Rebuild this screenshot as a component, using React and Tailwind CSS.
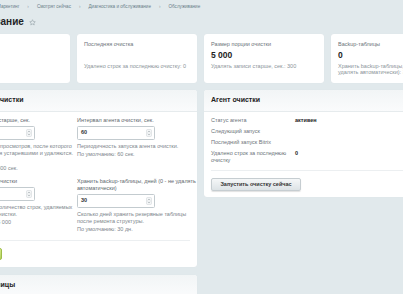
import React from "react";

const font = { fontFamily: '"Liberation Sans", Arial, sans-serif' };

function Spinner() {
  return (
    <svg width="6" height="8" viewBox="0 0 6 8" className="shrink-0">
      <rect x="0.5" y="0.5" width="5" height="7" rx="1" fill="#f3f5f6" stroke="#d3d8db" strokeWidth="0.6" />
      <path d="M1.8 3.2 L3 2.1 L4.2 3.2" fill="none" stroke="#9aa3a8" strokeWidth="0.6" />
      <path d="M1.8 4.8 L3 5.9 L4.2 4.8" fill="none" stroke="#9aa3a8" strokeWidth="0.6" />
    </svg>
  );
}

function NumInput({ value }) {
  return (
    <div className="mt-[2.5px] flex h-[14px] w-[78px] items-center justify-between rounded-[1.5px] border border-[#c3cbcf] bg-white pl-[3px] pr-[2px]">
      <span className="text-[5.5px] font-bold leading-none text-[#2f3336]">{value}</span>
      <Spinner />
    </div>
  );
}

function Field({ label, value, help, def }) {
  return (
    <div className="flex flex-col">
      <div className="text-[5.5px] leading-[7px] text-[#60686d]">
        {label.map((l, i) => (
          <div key={i} className="whitespace-nowrap">{l}</div>
        ))}
      </div>
      <NumInput value={value} />
      <div className="mt-[2.5px] text-[5.5px] leading-[7px] text-[#7c858b]">
        {help.map((l, i) => (
          <div key={i} className="h-[7px] whitespace-nowrap">{l}</div>
        ))}
      </div>
      <div className="mt-[1px] whitespace-nowrap text-[5.5px] leading-[7px] text-[#7c858b]">{def}</div>
    </div>
  );
}

function Card({ label, value, desc }) {
  return (
    <div className="flex h-[49px] flex-col rounded-[3px] bg-white px-[7px] pt-[7px] shadow-[0_0_1px_rgba(0,0,0,0.06)]">
      <div className="whitespace-nowrap text-[5.5px] leading-[6px] text-[#6b7378]">{label}</div>
      <div className="mt-[3px] h-[10px] whitespace-nowrap text-[8.5px] font-bold leading-[10px] text-[#222]">{value}</div>
      <div className="mt-[2.5px] text-[5.5px] leading-[6.5px] text-[#8a9398]">
        {desc.map((l, i) => (
          <div key={i} className="whitespace-nowrap">{l}</div>
        ))}
      </div>
    </div>
  );
}

function PanelHeader({ children }) {
  return (
    <div className="flex h-[22px] items-center rounded-t-[3px] border-b border-[#e6ebed] bg-gradient-to-b from-[#f2f5f6] to-[#fafbfc] px-[7px] text-[7px] font-bold text-[#222]">
      {children}
    </div>
  );
}

export default function App() {
  return (
    <div className="h-[294px] w-[403px] overflow-hidden bg-[#e1e9ec]" style={font}>
      <div className="ml-[-50px] w-[520px]">
        {/* breadcrumbs */}
        <div className="ml-[47px] mt-[3px] flex h-[7px] items-center gap-[8px] whitespace-nowrap text-[4.6px] leading-[7px] text-[#6b7f8a]">
          <span>Маркетинг</span>
          <span className="text-[#95a3ab]">›</span>
          <span>Смотрят сейчас</span>
          <span className="text-[#95a3ab]">›</span>
          <span>Диагностика и обслуживание</span>
          <span className="text-[#95a3ab]">›</span>
          <span>Обслуживание</span>
        </div>
        {/* title */}
        <div className="mt-[6px] flex h-[12px] items-center gap-[5px]">
          <span className="text-[10px] font-bold leading-[12px] text-[#1f2326]">Обслуживание</span>
          <svg width="7" height="7" viewBox="0 0 24 24" fill="none" stroke="#9aa6ac" strokeWidth="2.2" strokeLinejoin="round">
            <path d="M12 2.5l2.9 6.2 6.6.7-5 4.5 1.4 6.6L12 17.2l-5.9 3.3 1.4-6.6-5-4.5 6.6-.7z" />
          </svg>
        </div>
        {/* cards */}
        <div className="mt-[6px] grid grid-cols-[120px_120px_120px_120px] gap-[7px]">
          <Card label="Статус" value="OK" desc={["Модуль"]} />
          <Card label="Последняя очистка" value="" desc={["Удалено строк за последнюю очистку: 0"]} />
          <Card label="Размер порции очистки" value="5 000" desc={["Удалять записи старше, сек.: 300"]} />
          <Card label="Backup-таблицы" value="0" desc={["Хранить backup-таблицы, дней (0 - не", "удалять автоматически): 30"]} />
        </div>
        {/* panels */}
        <div className="mt-[7px] grid grid-cols-[247px_247px] items-start gap-[7px]">
          <div className="flex flex-col gap-[8px]">
            <div className="rounded-[3px] bg-white shadow-[0_0_1px_rgba(0,0,0,0.06)]">
              <PanelHeader>Настройки очистки</PanelHeader>
              <div className="px-[7px] pb-[7px] pt-[4.5px]">
                <div className="grid grid-cols-[113px_113px] gap-x-[7px] gap-y-[6px]">
                  <Field
                    label={["Удалять записи старше, сек."]}
                    value="300"
                    help={["Время (сек.) без просмотров, после которого", "записи считаются устаревшими и удаляются.", "Мин. 60"]}
                    def="По умолчанию: 300 сек."
                  />
                  <Field
                    label={["Интервал агента очистки, сек."]}
                    value="60"
                    help={["Периодичность запуска агента очистки."]}
                    def="По умолчанию: 60 сек."
                  />
                  <Field
                    label={["Размер порции очистки"]}
                    value="5000"
                    help={["Максимальное количество строк, удаляемых", "за один запуск очистки."]}
                    def="По умолчанию: 5 000"
                  />
                  <Field
                    label={["Хранить backup-таблицы, дней (0 - не удалять", "автоматически)"]}
                    value="30"
                    help={["Сколько дней хранить резервные таблицы", "после ремонта структуры."]}
                    def="По умолчанию: 30 дн."
                  />
                </div>
                <div className="mt-[7px] h-px bg-[#eceff1]" />
                <div className="mt-[7px] flex">
                  <div className="ml-[-8px] flex h-[12px] w-[53px] items-center justify-center rounded-[2px] border border-[#9ebc4a] bg-gradient-to-b from-[#d3ea86] to-[#b4d35e] text-[5.5px] font-bold text-[#3d4d10]">
                    Сохранить
                  </div>
                </div>
              </div>
            </div>
            <div className="rounded-[3px] bg-white shadow-[0_0_1px_rgba(0,0,0,0.06)]">
              <PanelHeader>Backup-таблицы</PanelHeader>
              <div className="h-[20px]" />
            </div>
          </div>
          <div className="rounded-[3px] bg-white shadow-[0_0_1px_rgba(0,0,0,0.06)]">
            <PanelHeader>Агент очистки</PanelHeader>
            <div className="px-[7px] pb-[6px] pt-[4.5px]">
              <div className="grid grid-cols-[84px_1fr] gap-y-[4px] text-[5.5px] leading-[7px]">
                <div className="text-[#6b7378]">Статус агента</div>
                <div className="font-bold text-[#222]">активен</div>
                <div className="text-[#6b7378]">Следующий запуск</div>
                <div className="font-bold text-[#222]"></div>
                <div className="text-[#6b7378]">Последний запуск Bitrix</div>
                <div className="font-bold text-[#222]"></div>
                <div className="pr-[4px] text-[#6b7378]">Удалено строк за последнюю очистку</div>
                <div className="font-bold text-[#222]">0</div>
              </div>
              <div className="mt-[6.5px] h-px bg-[#eceff1]" />
              <div className="mt-[6.5px] flex">
                <div className="flex h-[13.5px] w-[90px] items-center justify-center rounded-[2px] border border-[#c6cdd1] bg-gradient-to-b from-[#f5f7f8] to-[#dde3e6] text-[5.5px] font-bold text-[#333] shadow-[0_1px_1px_rgba(0,0,0,0.12)]">
                  Запустить очистку сейчас
                </div>
              </div>
            </div>
          </div>
        </div>
      </div>
    </div>
  );
}
